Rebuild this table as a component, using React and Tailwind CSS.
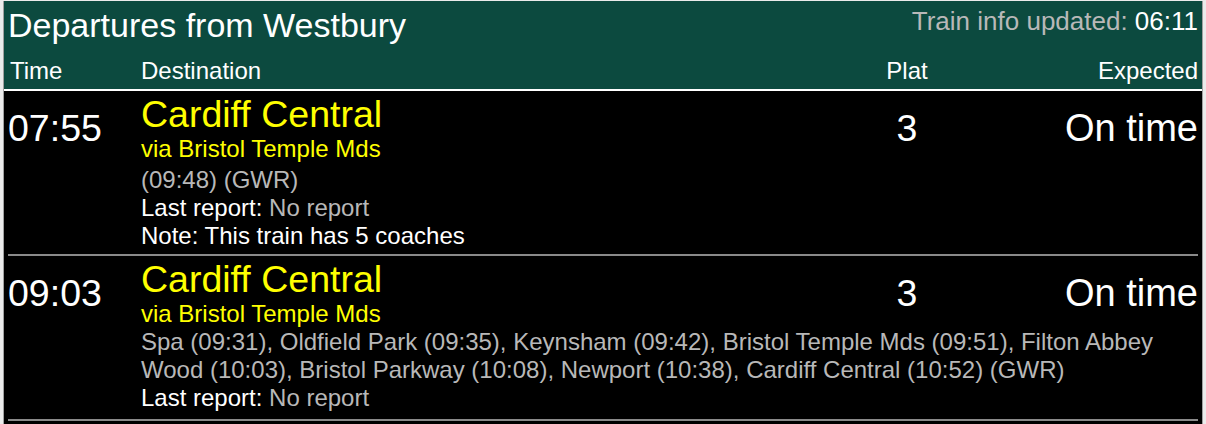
const trains = [
  {
    time: "07:55",
    destination: "Cardiff Central",
    via: "via Bristol Temple Mds",
    calling: "(09:48) (GWR)",
    callingClass: "mt-[3px]",
    plat: "3",
    expected: "On time",
    lastReport: "No report",
    note: "Note: This train has 5 coaches",
  },
  {
    time: "09:03",
    destination: "Cardiff Central",
    via: "via Bristol Temple Mds",
    calling:
      "Spa (09:31), Oldfield Park (09:35), Keynsham (09:42), Bristol Temple Mds (09:51), Filton Abbey Wood (10:03), Bristol Parkway (10:08), Newport (10:38), Cardiff Central (10:52) (GWR)",
    callingClass: "",
    plat: "3",
    expected: "On time",
    lastReport: "No report",
    note: null,
  },
];

/* ── One departure ─────────────────────────────────── */
function TrainRow({ t }) {
  return (
    <div className="flex h-[165px] border-b-2 border-[#8a8a8a]">
      <div className="w-[133px] shrink-0 pt-[16px] text-[37.5px] leading-[42px] text-white">
        {t.time}
      </div>
      <div className="flex-1 min-w-0">
        <div className="flex h-[44px] items-start">
          <div className="flex-1 pt-[2px] text-[37.5px] leading-[42px] text-[#ffff00]">
            {t.destination}
          </div>
          <div className="w-[122px] shrink-0 pt-[16px] text-center text-[37.5px] leading-[42px] text-white">
            {t.plat}
          </div>
          <div className="w-[230px] shrink-0 pt-[16px] text-right text-[38px] leading-[42px] text-white">
            {t.expected}
          </div>
        </div>
        <div className="text-[24px] leading-[28px]">
          <div className="text-[#ffff00]">{t.via}</div>
          <div className={`text-[#b8b8b8] ${t.callingClass}`}>{t.calling}</div>
          <div className="text-white">
            Last report: <span className="text-[#b8b8b8]">{t.lastReport}</span>
          </div>
          {t.note && <div className="text-white">{t.note}</div>}
        </div>
      </div>
    </div>
  );
}

/* ── Root ───────────────────────────────────────────── */
export default function App() {
  return (
    <div className="min-h-screen bg-[#ebebeb] px-[3px] pt-[1px] font-['Liberation_Sans',Arial,sans-serif]">
      <div className="border-x border-[#a0a0a0] bg-black">
        {/* Header */}
        <div className="bg-[#0c4a3f] px-[4px] pt-[4px] pb-[4px] text-white">
          <div className="flex h-[52px] items-start justify-between">
            <h1 className="text-[34px] leading-[40px]">Departures from Westbury</h1>
            <div className="mt-[1px] text-[26px] leading-[30px]">
              <span className="text-[#b8b8b8]">Train info updated: </span>06:11
            </div>
          </div>
          <div className="flex text-[24px] leading-[28px]">
            <div className="w-[133px] shrink-0 pl-[2px]">Time</div>
            <div className="flex-1">Destination</div>
            <div className="w-[122px] shrink-0 text-center">Plat</div>
            <div className="w-[230px] shrink-0 text-right">Expected</div>
          </div>
        </div>
        <div className="h-[2px] bg-white" />

        {/* Departures */}
        <div className="px-[4px] pb-[20px]">
          {trains.map((t) => (
            <TrainRow key={t.time} t={t} />
          ))}
        </div>
      </div>
    </div>
  );
}
